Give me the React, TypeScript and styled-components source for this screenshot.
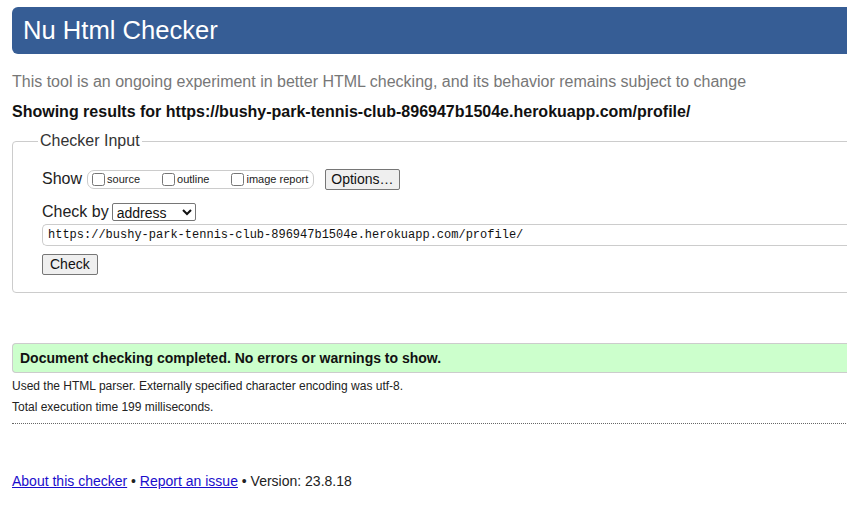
import React from 'react';
import styled, { createGlobalStyle } from 'styled-components';

const GlobalStyle = createGlobalStyle`
    html, body {
        margin: 0;
        padding: 0;
        background: #fff;
        overflow: hidden;
    }
    body {
        font-family: "Liberation Sans", Arial, sans-serif;
        color: #222;
    }
`;

const Page = styled.div`
    width: 1100px;
    padding: 7px 0 0 12px;
`;

const Header = styled.h1`
    margin: 0;
    height: 47px;
    background: #365d95;
    border-radius: 6px;
    color: #fff;
    font-weight: 400;
    font-size: 25.6px;
    line-height: 47px;
    padding-left: 11px;
`;

const Intro = styled.p`
    margin: 18px 0 0;
    color: #777;
    font-size: 16px;
    line-height: 20px;
`;

const ResultsFor = styled.p`
    margin: 10px 0 0;
    font-weight: 700;
    font-size: 16px;
    line-height: 20px;
    color: #111;
`;

const Fieldset = styled.fieldset`
    margin: 10px 0 0;
    padding: 18px 0 17px 29px;
    border: 1px solid #ccc;
    border-radius: 4px;
    min-width: 0;
`;

const Legend = styled.legend`
    margin-left: -4px;
    padding: 0 2px;
    font-size: 16px;
    color: #333;
`;

const Row = styled.div`
    display: flex;
    align-items: center;
    gap: 4px;
    font-size: 16px;
    color: #222;
    height: 22px;
`;

const Label = styled.span`
    font-size: 16px;
`;

const OptionGroup = styled.div`
    display: flex;
    align-items: center;
    height: 17px;
    padding: 0 5px 0 4px;
    border: 1px solid #ccc;
    border-radius: 7px;
    margin-left: 1px;
`;

const CheckItem = styled.label`
    display: flex;
    align-items: center;
    font-size: 11px;
    color: #222;
    margin-right: 22px;

    &:last-child {
        margin-right: 0;
    }

    input {
        margin: 0 2px 0 0;
        width: 13px;
        height: 13px;
    }
`;

const Button = styled.button`
    font-family: "Liberation Sans", Arial, sans-serif;
    font-size: 14px;
    color: #111;
    background: #efefef;
    border: 1px solid #767676;
    border-radius: 2px;
    padding: 0 6px;
    height: 21px;
    line-height: 19px;
`;

const OptionsButton = styled(Button)`
    margin-left: 7px;
    padding: 0 5px;
`;

const Select = styled.select`
    font-family: "Liberation Sans", Arial, sans-serif;
    font-size: 14px;
    width: 84px;
    height: 18px;
    padding: 0;
    border: 1px solid #767676;
    border-radius: 2px;
    background: #fff;
    color: #111;
    margin-left: -1px;
`;

const CheckByRow = styled(Row)`
    margin-top: 11px;
`;

const UrlInput = styled.input`
    display: block;
    box-sizing: border-box;
    width: 100%;
    height: 22px;
    margin-top: 1px;
    padding: 0 5px;
    border: 1px solid #ccc;
    border-right: none;
    border-radius: 5px 0 0 5px;
    font-family: "Liberation Mono", "DejaVu Sans Mono", monospace;
    font-size: 12px;
    color: #111;
`;

const CheckButton = styled(Button)`
    display: block;
    margin-top: 8px;
    height: 21px;
    padding: 0 7px;
`;

const Success = styled.div`
    margin-top: 50px;
    height: 28px;
    background: #ccffcc;
    border: 1px solid #ccc;
    border-right: none;
    border-radius: 4px 0 0 4px;
    padding-left: 7px;
    display: flex;
    align-items: center;
    font-weight: 700;
    font-size: 14px;
    color: #111;
`;

const Details = styled.div`
    margin-top: 3px;
`;

const Detail = styled.p`
    margin: 0;
    font-size: 12px;
    line-height: 21px;
    color: #222;
`;

const Divider = styled.hr`
    margin: 5px 0 0;
    border: none;
    border-top: 1px dotted #666;
`;

const Footer = styled.p`
    margin: 48px 0 0;
    font-size: 14px;
    line-height: 18px;
    color: #222;

    a {
        color: #1a0dcc;
        text-decoration: underline;
    }
`;

const options = ['source', 'outline', 'image report'];

const App: React.FC = () => {
    const url = 'https://bushy-park-tennis-club-896947b1504e.herokuapp.com/profile/';

    return (
        <>
            <GlobalStyle />
            <Page>
                <Header>Nu Html Checker</Header>
                <Intro>
                    This tool is an ongoing experiment in better HTML checking, and its behavior remains subject to change
                </Intro>
                <ResultsFor>Showing results for {url}</ResultsFor>

                <Fieldset>
                    <Legend>Checker Input</Legend>
                    <Row>
                        <Label>Show</Label>
                        <OptionGroup>
                            {options.map((o) => (
                                <CheckItem key={o}>
                                    <input type="checkbox" />
                                    {o}
                                </CheckItem>
                            ))}
                        </OptionGroup>
                        <OptionsButton>Options…</OptionsButton>
                    </Row>
                    <CheckByRow>
                        <Label>Check by</Label>
                        <Select defaultValue="address">
                            <option value="address">address</option>
                            <option value="file">file upload</option>
                            <option value="text">text input</option>
                        </Select>
                    </CheckByRow>
                    <UrlInput type="url" defaultValue={url} />
                    <CheckButton>Check</CheckButton>
                </Fieldset>

                <Success>Document checking completed. No errors or warnings to show.</Success>
                <Details>
                    <Detail>Used the HTML parser. Externally specified character encoding was utf-8.</Detail>
                    <Detail>Total execution time 199 milliseconds.</Detail>
                </Details>
                <Divider />

                <Footer>
                    <a href="#">About this checker</a> • <a href="#">Report an issue</a> • Version: 23.8.18
                </Footer>
            </Page>
        </>
    );
};

export default App;
